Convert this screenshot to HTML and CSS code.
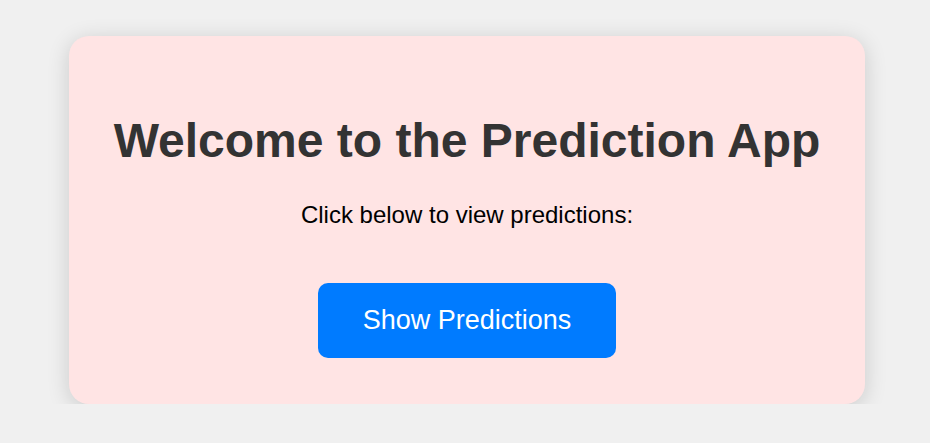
FILE: index.html
```html
<!DOCTYPE html>
<html lang="en">
<head>
<meta charset="utf-8">
<title>Prediction App</title>
<link rel="stylesheet" href="styles.css">
</head>
<body>
<div class="page">
  <div class="card">
    <h1 class="title">Welcome to the Prediction App</h1>
    <p class="subtitle">Click below to view predictions:</p>
    <button class="btn" type="button">Show Predictions</button>
  </div>
</div>
</body>
</html>
```
FILE: styles.css
```css
html, body {
  margin: 0;
  padding: 0;
}
body {
  background: #f0f0f0;
  font-family: "Liberation Sans", Arial, sans-serif;
}
.page {
  display: flex;
  justify-content: center;
  padding-top: 36px;
  padding-left: 4px;
}
.card {
  width: 796px;
  box-sizing: border-box;
  height: 368px;
  background: #ffe4e4;
  border-radius: 20px;
  box-shadow: 0 4px 22px rgba(0, 0, 0, 0.16);
  display: flex;
  flex-direction: column;
  align-items: center;
  padding-top: 40px;
}
.title {
  margin: 37px 0 0;
  font-size: 48px;
  font-weight: bold;
  color: #333;
}
.subtitle {
  margin: 33px 0 0;
  font-size: 24px;
  color: #000;
}
.btn {
  margin-top: 54px;
  background: #007bff;
  color: #fff;
  border: none;
  border-radius: 10px;
  font-family: "Liberation Sans", Arial, sans-serif;
  font-size: 27px;
  padding: 22px 45px;
}
```
